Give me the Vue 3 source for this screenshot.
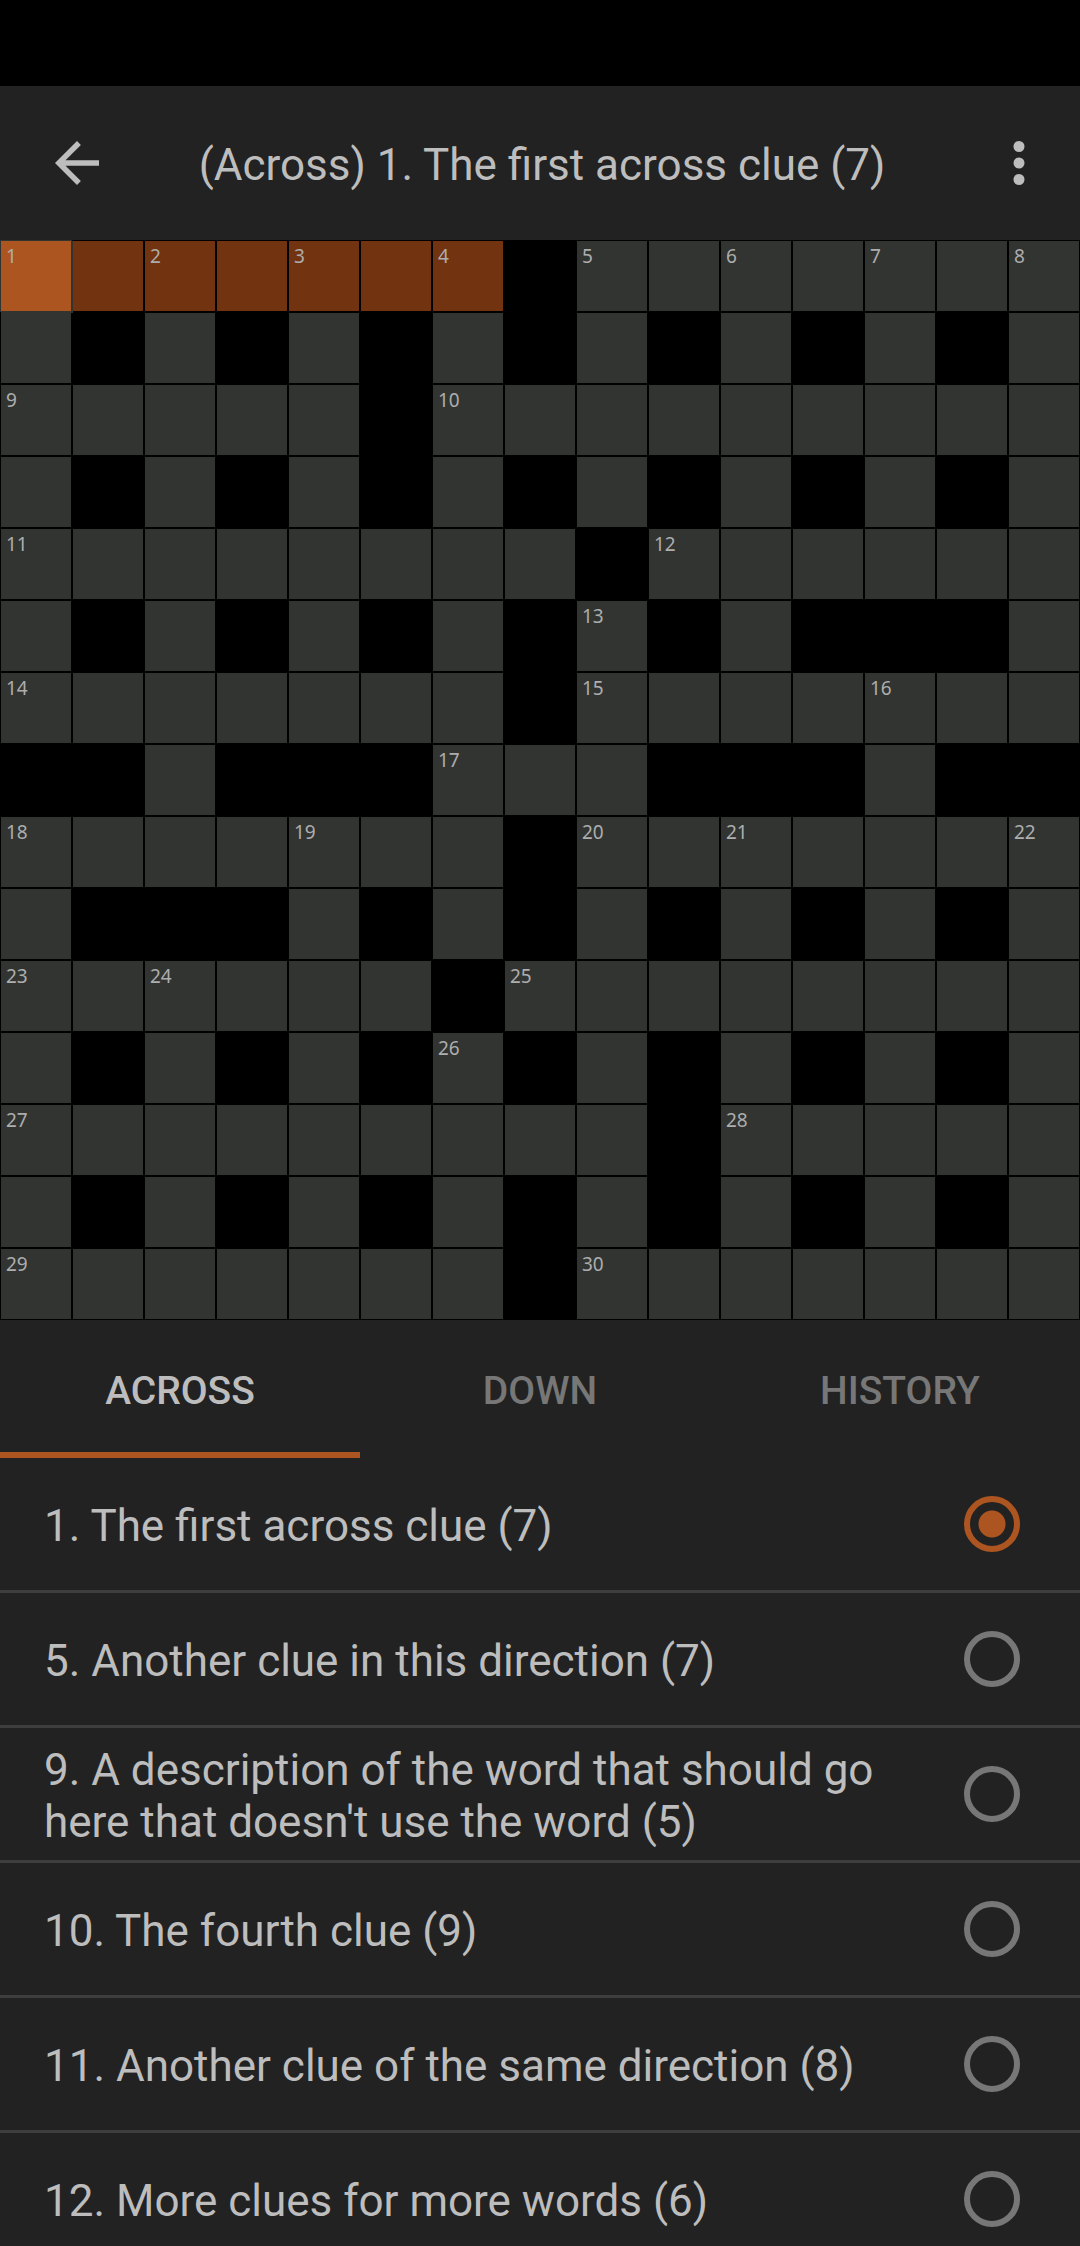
<script setup>
import { computed, ref } from 'vue'

const layout = [
  '.......#.......',
  '.#.#.#.#.#.#.#.',
  '.....#.........',
  '.#.#.#.#.#.#.#.',
  '........#......',
  '.#.#.#.#.#.###.',
  '.......#.......',
  '##.###...###.##',
  '.......#.......',
  '.###.#.#.#.#.#.',
  '......#........',
  '.#.#.#.#.#.#.#.',
  '.........#.....',
  '.#.#.#.#.#.#.#.',
  '.......#.......'
]

const open = (r, c) => layout[r]?.[c] === '.'

// Number every square that starts a word, and remember which across word it is in
function buildCells() {
  const cells = []
  let count = 0
  layout.forEach((row, r) => {
    let word = null
    for (let c = 0; c < row.length; c++) {
      const key = `${r}-${c}`
      if (!open(r, c)) {
        word = null
        cells.push({ key, block: true })
        continue
      }
      const startsAcross = !open(r, c - 1) && open(r, c + 1)
      const startsDown = !open(r - 1, c) && open(r + 1, c)
      const number = startsAcross || startsDown ? ++count : null
      if (startsAcross) word = number
      cells.push({ key, block: false, number, word, start: startsAcross })
    }
  })
  return cells
}

const cells = buildCells()

const clues = [
  { number: 1, text: 'The first across clue (7)' },
  { number: 5, text: 'Another clue in this direction (7)' },
  { number: 9, text: "A description of the word that should go here that doesn't use the word (5)" },
  { number: 10, text: 'The fourth clue (9)' },
  { number: 11, text: 'Another clue of the same direction (8)' },
  { number: 12, text: 'More clues for more words (6)' }
]

const tabs = ['Across', 'Down', 'History']
const activeTab = ref('Across')
const selected = ref(1)
const current = computed(() => clues.find((clue) => clue.number === selected.value))

function pick(cell) {
  if (clues.some((clue) => clue.number === cell.word)) selected.value = cell.word
}
</script>

<template>
  <div class="app">
    <div class="status-bar"></div>

    <header class="toolbar">
      <button class="icon-button" type="button" aria-label="Back">
        <svg viewBox="0 0 24 24" aria-hidden="true">
          <path d="M20 11H7.83l5.59-5.59L12 4l-8 8 8 8 1.41-1.41L7.83 13H20v-2z" />
        </svg>
      </button>
      <h1 class="title">(Across) {{ current.number }}. {{ current.text }}</h1>
      <button class="icon-button" type="button" aria-label="More options">
        <svg viewBox="0 0 24 24" aria-hidden="true">
          <circle cx="12" cy="6" r="2" />
          <circle cx="12" cy="12" r="2" />
          <circle cx="12" cy="18" r="2" />
        </svg>
      </button>
    </header>

    <main class="board">
      <template v-for="cell in cells" :key="cell.key">
        <div v-if="cell.block" class="block"></div>
        <button
          v-else
          type="button"
          class="cell"
          :class="{ word: cell.word === selected, cursor: cell.word === selected && cell.start }"
          @click="pick(cell)"
        >{{ cell.number }}</button>
      </template>
    </main>

    <nav class="tabs" role="tablist">
      <button
        v-for="tab in tabs"
        :key="tab"
        type="button"
        role="tab"
        class="tab"
        :class="{ active: tab === activeTab }"
        :aria-selected="tab === activeTab"
        @click="activeTab = tab"
      >{{ tab }}</button>
    </nav>

    <ul class="clues">
      <li v-for="clue in clues" :key="clue.number" class="clue">
        <label class="clue-label" :for="`clue-${clue.number}`">{{ clue.number }}. {{ clue.text }}</label>
        <input
          :id="`clue-${clue.number}`"
          v-model="selected"
          class="radio"
          type="radio"
          name="clue"
          :value="clue.number"
        />
      </li>
    </ul>
  </div>
</template>

<style>
body {
  margin: 0;
  background: #222222;
}
</style>

<style scoped>
.app {
  display: flex;
  flex-direction: column;
  height: 100vh;
  background: #222222;
  color: #bdbdbd;
  font-family: Roboto, sans-serif;
}

button {
  margin: 0;
  border: 0;
  padding: 0;
  background: none;
  color: inherit;
  font-family: inherit;
}

.status-bar {
  flex: none;
  height: 86px;
  background: #000000;
}

.toolbar {
  flex: none;
  display: flex;
  align-items: center;
  height: 154px;
  padding: 0 28px 0 44px;
}

.icon-button {
  flex: none;
  width: 66px;
  height: 66px;
}

.icon-button svg {
  display: block;
  width: 100%;
  height: 100%;
  fill: currentColor;
}

.title {
  flex: 1;
  margin: 0;
  padding: 4px 12px 0 0;
  font-size: 44px;
  font-weight: 400;
  line-height: 52px;
  text-align: center;
}

.board {
  flex: none;
  display: grid;
  grid-template-columns: repeat(15, 1fr);
  background: #000000;
}

.cell,
.block {
  box-sizing: border-box;
  aspect-ratio: 1;
  border: 1px solid #000000;
}

.cell {
  display: flex;
  align-items: flex-start;
  padding: 3px 5px;
  background: #323432;
  color: #adadad;
  font-family: "Noto Sans", sans-serif;
  font-size: 19px;
  line-height: 24px;
}

.cell.word {
  background: #723310;
}

.cell.cursor {
  z-index: 1;
  border-color: #323432;
  background: #ad5520;
  box-shadow: 1px 1px 0 #323432;
}

.tabs {
  flex: none;
  display: grid;
  grid-template-columns: repeat(3, 1fr);
  height: 138px;
}

.tab {
  border-bottom: 6px solid transparent;
  padding-top: 10px;
  color: #777777;
  font-size: 39px;
  font-weight: 500;
  text-transform: uppercase;
}

.tab.active {
  border-bottom-color: #ad5520;
  color: #bdbdbd;
}

.clues {
  flex: 1;
  min-height: 0;
  margin: 0;
  padding: 0;
  overflow-y: auto;
  scrollbar-width: none;
  list-style: none;
}

.clue {
  display: flex;
  align-items: center;
  gap: 44px;
  min-height: 132px;
  padding: 0 60px 0 44px;
  border-bottom: 3px solid #3e3e3e;
}

.clue-label {
  flex: 1;
  padding-top: 4px;
  font-size: 44px;
  line-height: 52px;
}

.radio {
  flex: none;
  appearance: none;
  box-sizing: border-box;
  width: 56px;
  height: 56px;
  margin: 0;
  border: 6px solid #777777;
  border-radius: 50%;
}

.radio:checked {
  border-color: #ad5520;
  background: radial-gradient(circle, #ad5520 13px, transparent 14px);
}
</style>
